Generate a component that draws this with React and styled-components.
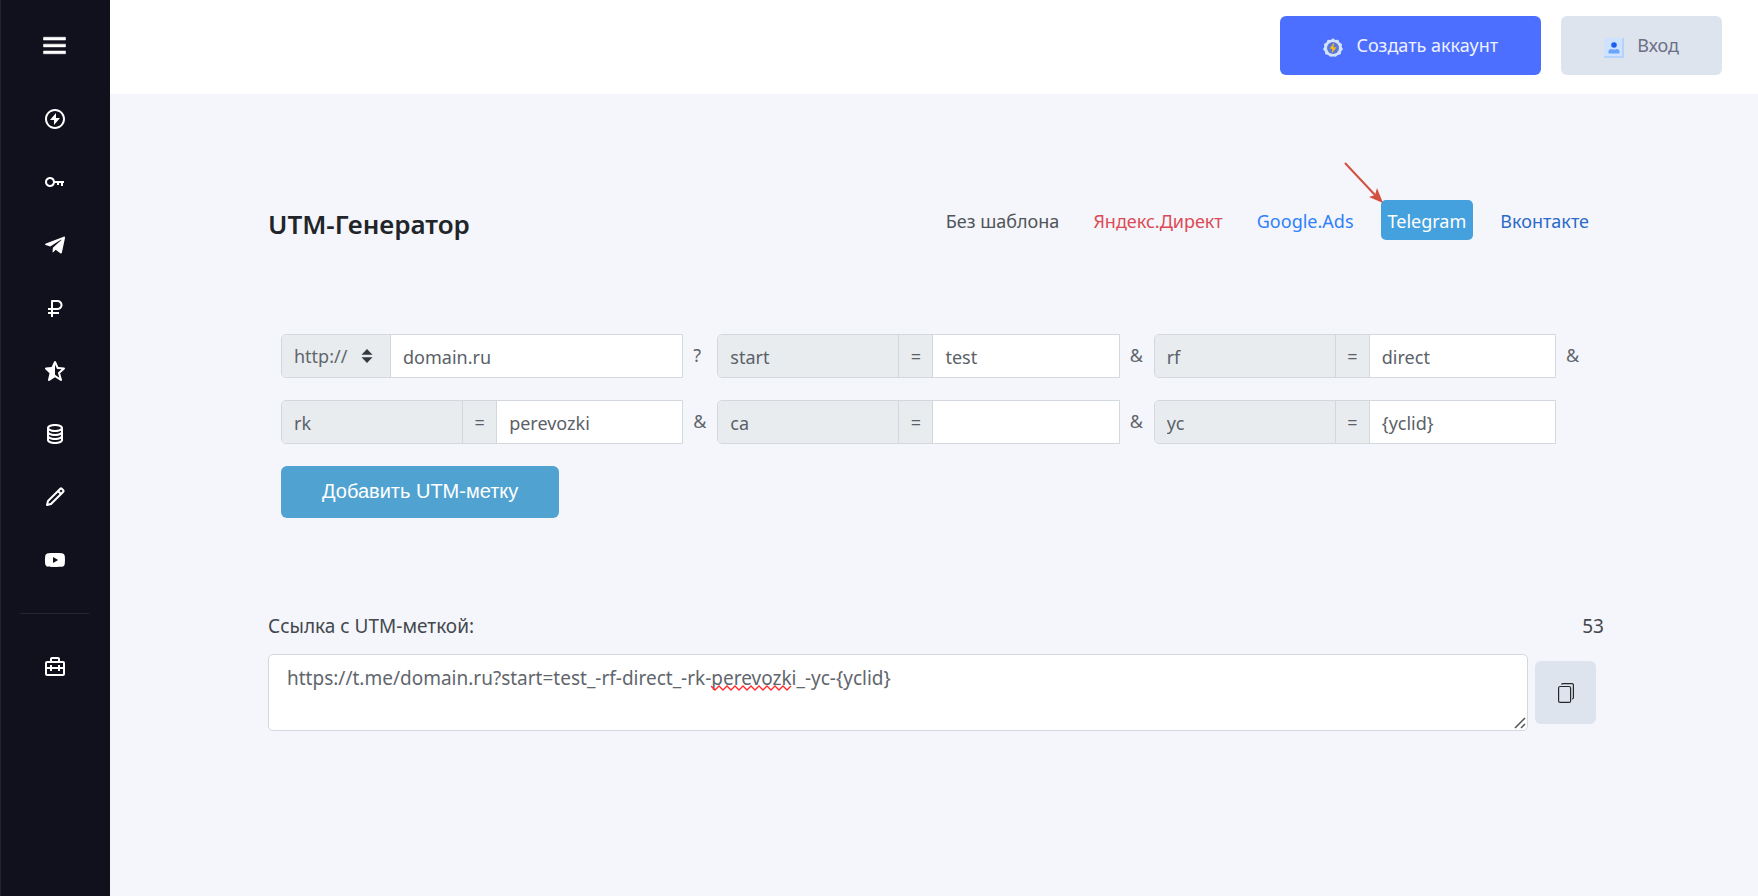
import { useState } from "react";
import styled, { createGlobalStyle } from "styled-components";
import {
  BiMenu,
  BiBoltCircle,
  BiKey,
  BiLogoTelegram,
  BiRuble,
  BiSolidStarHalf,
  BiCoinStack,
  BiPencil,
  BiLogoYoutube,
  BiBriefcaseAlt2,
} from "react-icons/bi";

const menu = [
  { label: "Сервисы", icon: BiBoltCircle },
  { label: "Ключи", icon: BiKey },
  { label: "Telegram", icon: BiLogoTelegram },
  { label: "Тарифы", icon: BiRuble },
  { label: "Отзывы", icon: BiSolidStarHalf },
  { label: "База данных", icon: BiCoinStack },
  { label: "Блог", icon: BiPencil },
  { label: "YouTube", icon: BiLogoYoutube },
];

const templates = [
  { name: "Без шаблона", color: "#4f5559" },
  { name: "Яндекс.Директ", color: "#dc4a56" },
  { name: "Google.Ads", color: "#2f80fb" },
  { name: "Telegram", color: "#45a1de" },
  { name: "Вконтакте", color: "#2a6ac8" },
];

const initialParams = [
  { key: "start", value: "test", sep: "&" },
  { key: "rf", value: "direct", sep: "&" },
  { key: "rk", value: "perevozki", sep: "&" },
  { key: "ca", value: "", sep: "&" },
  { key: "yc", value: "{yclid}", sep: "" },
];

const GearIcon = () => (
  <svg width="20" height="20" viewBox="0 0 20 20" aria-hidden="true">
    <path
      d="M10 0.300l2.400 1.600 2.900-.1 1.200 2.600 2.500 1.500-.3 2.900L20 11.200l-1.900 2.200-.4 2.900-2.800.6-2.200 1.900L10 18.600l-2.700.2-2.200-1.900-2.800-.6-.4-2.900L0 11.200l1.300-2.400L1 5.900l2.500-1.500 1.200-2.600 2.900.1z"
      fill="#d3e3fd"
    />
    <circle cx="10" cy="10" r="6" fill="#5b78d8" />
    <path d="M11.200 4.500L6.500 10.800h2.900l-.7 4.700 4.900-6.300h-3.200z" fill="#fbbc13" />
  </svg>
);

const UserIcon = () => (
  <svg width="20" height="20" viewBox="0 0 20 20" aria-hidden="true">
    <path d="M0 0h20v20H0z" fill="#b3d3fd" />
    <path d="M0 0h18v18H0z" fill="#cfe2ff" />
    <circle cx="10" cy="7" r="2.800" fill="#1c5ff0" />
    <path d="M4.500 15.500v-2c0-1.600 1.200-2.500 2.700-2.500 1 .8 4.600.8 5.600 0 1.500 0 2.700.9 2.700 2.500v2z" fill="#6ba4fb" />
  </svg>
);

const CopyIcon = () => (
  <svg width="16" height="20" viewBox="0 0 16 20" fill="none" stroke="#25282b" strokeWidth="1.200" aria-hidden="true">
    <rect x="0.600" y="3.500" width="12" height="15.900" rx="1.500" />
    <path d="M3.500 1.500Q4 .6 5 .6h9q1.400 0 1.400 1.400v12.500q0 1.500-1.400 1.500" />
  </svg>
);

const SelectArrows = () => (
  <svg width="12" height="14" viewBox="0 0 12 14" fill="#343a40" aria-hidden="true">
    <path d="M6 0l5.500 5.800H.5zM6 14L.5 8.200h11z" />
  </svg>
);

export default function App() {
  const [open, setOpen] = useState(false);
  const [active, setActive] = useState("Telegram");
  const [domain, setDomain] = useState("domain.ru");
  const [params, setParams] = useState(initialParams);
  const [link, setLink] = useState(
    "https://t.me/domain.ru?start=test_-rf-direct_-rk-perevozki_-yc-{yclid}"
  );

  const changeValue = (index, value) => {
    setParams(params.map((p, i) => (i === index ? { ...p, value } : p)));
  };

  return (
    <Layout>
      <GlobalStyle />
      <Sidebar>
        <MenuButton
          type="button"
          aria-label="Меню"
          aria-expanded={open}
          onClick={() => setOpen(!open)}
        >
          <BiMenu />
        </MenuButton>
        <MenuList>
          {menu.map(({ label, icon: Icon }) => (
            <MenuLink key={label} href="#" aria-label={label}>
              <Icon />
            </MenuLink>
          ))}
        </MenuList>
        <Divider />
        <MenuLink href="#" aria-label="Инструменты">
          <BiBriefcaseAlt2 />
        </MenuLink>
      </Sidebar>

      <Page>
        <Header>
          <HeaderButton type="button" $primary>
            <GearIcon />
            Создать аккаунт
          </HeaderButton>
          <HeaderButton type="button">
            <UserIcon />
            Вход
          </HeaderButton>
        </Header>

        <Content>
          <TitleRow>
            <Title>UTM-Генератор</Title>
            <Templates>
              {templates.map(({ name, color }) => (
                <TemplateButton
                  key={name}
                  type="button"
                  $color={color}
                  $active={active === name}
                  onClick={() => setActive(name)}
                >
                  {name}
                  {name === "Telegram" && (
                    <Pointer width="40" height="42" viewBox="0 0 40 42" aria-hidden="true">
                      <path d="M1 1l30 32" stroke="#d2503f" strokeWidth="2" />
                      <path d="M39 41l-14-6 6-2 2-7z" fill="#d2503f" />
                    </Pointer>
                  )}
                </TemplateButton>
              ))}
            </Templates>
          </TitleRow>

          <Params>
            <Cell>
              <Group>
                <SelectBox>
                  <Select aria-label="Протокол" defaultValue="http://">
                    <option>http://</option>
                    <option>https://</option>
                  </Select>
                  <SelectArrows />
                </SelectBox>
                <Field
                  aria-label="Домен"
                  value={domain}
                  onChange={(e) => setDomain(e.target.value)}
                />
              </Group>
              <Separator>?</Separator>
            </Cell>
            {params.map(({ key, value, sep }, i) => (
              <Cell key={key}>
                <Group>
                  <Field $name readOnly aria-label="Название метки" value={key} />
                  <Equals>=</Equals>
                  <Field
                    aria-label={key}
                    value={value}
                    onChange={(e) => changeValue(i, e.target.value)}
                  />
                </Group>
                <Separator>{sep}</Separator>
              </Cell>
            ))}
          </Params>
          <AddButton type="button">Добавить UTM-метку</AddButton>

          <ResultHead>
            <label htmlFor="result">Ссылка с UTM-меткой:</label>
            <span>{53}</span>
          </ResultHead>
          <ResultRow>
            <ResultBox>
              <Result
                id="result"
                spellCheck="false"
                value={link}
                onChange={(e) => setLink(e.target.value)}
              />
              <Squiggle width="82" height="6" viewBox="0 0 82 6" aria-hidden="true">
                <path
                  d="M0 1l4 4 4-4 4 4 4-4 4 4 4-4 4 4 4-4 4 4 4-4 4 4 4-4 4 4 4-4 4 4 4-4 4 4 4-4 4 4 4-4"
                  fill="none"
                  stroke="#ff2a2a"
                  strokeWidth="1.300"
                />
              </Squiggle>
              <Grip width="12" height="12" viewBox="0 0 12 12" aria-hidden="true">
                <path d="M1 11L11 1M7 11l4-4" stroke="#55585c" strokeWidth="1.600" />
              </Grip>
            </ResultBox>
            <CopyButton
              type="button"
              aria-label="Скопировать"
              onClick={() => navigator.clipboard?.writeText(link)}
            >
              <CopyIcon />
            </CopyButton>
          </ResultRow>
        </Content>
      </Page>
    </Layout>
  );
}

const GlobalStyle = createGlobalStyle`
  * {
    box-sizing: border-box;
  }
  body {
    margin: 0;
    background: #f5f6fb;
    color: #43484d;
    font-family: "Noto Sans", "Open Sans", sans-serif;
    font-size: 18px;
  }
  button, input, select, textarea {
    font-family: inherit;
    font-size: inherit;
  }
  button {
    border: 0;
    cursor: pointer;
  }
`;

const Layout = styled.div`
  display: flex;
  min-height: 100vh;
`;

const Sidebar = styled.nav`
  display: flex;
  flex-direction: column;
  flex-shrink: 0;
  width: 110px;
  padding: 14px 21px 14px 19px;
  background: #11101d;
  border-left: 1px solid #222228;
`;

const MenuButton = styled.button`
  display: flex;
  justify-content: center;
  align-items: center;
  height: 63px;
  margin-bottom: 10px;
  padding: 0;
  background: none;
  color: #fff;
  font-size: 33px;

  svg {
    stroke: currentColor;
    stroke-width: 0.4;
  }
`;

const MenuList = styled.div`
  display: flex;
  flex-direction: column;
`;

const MenuLink = styled.a`
  display: flex;
  justify-content: center;
  align-items: center;
  height: 63px;
  color: #fff;
  font-size: 24px;
`;

const Divider = styled.hr`
  width: 100%;
  margin: 22px 0 21px;
  border: 0;
  border-top: 1px solid #25242f;
`;

const Page = styled.div`
  flex: 1;
  min-width: 0;
`;

const Header = styled.header`
  display: flex;
  justify-content: flex-end;
  gap: 20px;
  padding: 16px 36px 19px;
  background: #fff;
`;

const HeaderButton = styled.button`
  display: flex;
  align-items: center;
  gap: 13px;
  height: 59px;
  padding: 0 43px 2px;
  border-radius: 6px;
  background: ${(p) => (p.$primary ? "#4c6fff" : "#dee4ee")};
  color: ${(p) => (p.$primary ? "#eef2ff" : "#6b7085")};

  svg {
    margin-top: 6px;
  }
`;

const Content = styled.main`
  max-width: 1384px;
  margin: 0 auto;
  padding: 106px 22px 40px 26px;
`;

const TitleRow = styled.div`
  display: flex;
  justify-content: space-between;
  align-items: flex-start;
  padding-right: 8px;
`;

const Title = styled.h1`
  margin: 0;
  padding-top: 6px;
  color: #212529;
  font-size: 26px;
  font-weight: 600;
  line-height: 36px;
`;

const Templates = styled.div`
  display: flex;
  gap: 20px;
`;

const TemplateButton = styled.button`
  position: relative;
  height: 40px;
  padding: 2px 7px 0;
  border-radius: 5px;
  background: ${(p) => (p.$active ? p.$color : "transparent")};
  color: ${(p) => (p.$active ? "#fff" : p.$color)};
`;

const Pointer = styled.svg`
  position: absolute;
  right: calc(100% - 3px);
  bottom: calc(100% - 4px);
  pointer-events: none;
`;

const Params = styled.div`
  display: grid;
  grid-template-columns: repeat(3, minmax(0, 1fr));
  row-gap: 22px;
  margin: 92px 14px 0 13px;
`;

const Cell = styled.div`
  display: flex;
`;

const Group = styled.div`
  display: flex;
  flex: 1;
  min-width: 0;
  height: 44px;
  border: 1px solid #d3d8de;
  border-radius: 5px 0 0 5px;
  overflow: hidden;
`;

const SelectBox = styled.div`
  position: relative;
  flex-shrink: 0;
  width: 109px;
  border-right: 1px solid #d3d8de;

  svg {
    position: absolute;
    top: 14px;
    right: 17px;
    pointer-events: none;
  }
`;

const Select = styled.select`
  width: 100%;
  height: 100%;
  padding: 0 12px;
  border: 0;
  background: #e8ecee;
  color: #5f666d;
  appearance: none;
`;

const Field = styled.input`
  flex: ${(p) => (p.$name ? "0 0 45%" : "1")};
  min-width: 0;
  padding: 2px 12px 0;
  border: 0;
  background: ${(p) => (p.$name ? "#e8ecee" : "#fff")};
  color: #5a6168;
  outline: none;
`;

const Equals = styled.span`
  display: flex;
  justify-content: center;
  align-items: center;
  width: 35px;
  border: solid #d3d8de;
  border-width: 0 1px;
  background: #e8ecee;
  color: #5a6168;
`;

const Separator = styled.span`
  width: 34px;
  padding-left: 10px;
  color: #5f666d;
  line-height: 42px;
`;

const AddButton = styled.button`
  height: 52px;
  margin: 22px 14px 0 13px;
  padding: 0 41px 2px;
  border-radius: 6px;
  background: #50a3d0;
  color: #fff;
  font-family: "Liberation Sans", sans-serif;
  font-size: 20px;
`;

const ResultHead = styled.div`
  display: flex;
  justify-content: space-between;
  margin-top: 94px;
  font-size: 19px;
  line-height: 28px;
`;

const ResultRow = styled.div`
  display: flex;
  align-items: center;
  gap: 7px;
  margin-top: 14px;
  padding-right: 8px;
`;

const ResultBox = styled.div`
  position: relative;
  flex: 1;
`;

const Result = styled.textarea`
  display: block;
  width: 100%;
  height: 77px;
  padding: 9px 18px;
  border: 1px solid #d3d8de;
  border-radius: 5px;
  background: #fff;
  color: #5f666d;
  font-size: 19px;
  line-height: 28px;
  resize: vertical;
  outline: none;

  &::-webkit-resizer {
    background: transparent;
  }
`;

const Squiggle = styled.svg`
  position: absolute;
  top: 31px;
  left: 443px;
  pointer-events: none;
`;

const Grip = styled.svg`
  position: absolute;
  right: 2px;
  bottom: 2px;
  pointer-events: none;
`;

const CopyButton = styled.button`
  display: flex;
  justify-content: center;
  align-items: center;
  width: 61px;
  height: 63px;
  padding: 0;
  border-radius: 6px;
  background: #dee4ee;
`;
